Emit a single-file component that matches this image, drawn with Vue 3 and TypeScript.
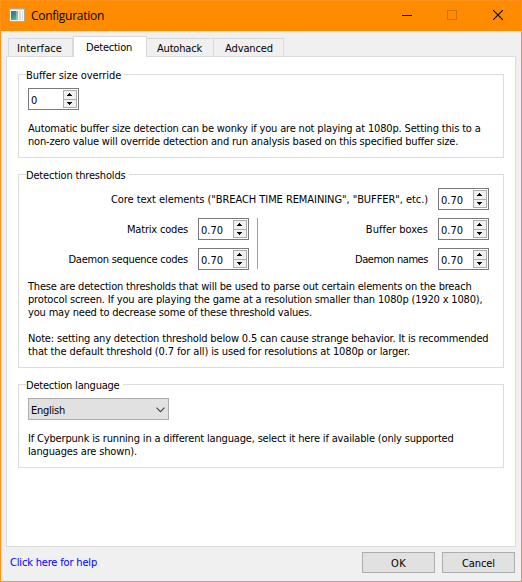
<script setup lang="ts">
import { ref } from 'vue'

interface Line { text: string; width: number }
interface Threshold { label: string; width: number; value: string }

const tabs = [
  { name: 'Interface', width: 45 },
  { name: 'Detection', width: 46 },
  { name: 'Autohack', width: 45 },
  { name: 'Advanced', width: 48 },
]
const active = ref('Detection')

const bufferNote: Line[] = [
  { text: 'Automatic buffer size detection can be wonky if you are not playing at 1080p. Setting this to a', width: 452.5 },
  { text: 'non-zero value will override detection and run analysis based on this specified buffer size.', width: 430 },
]
const thresholdNote: Line[] = [
  { text: 'These are detection thresholds that will be used to parse out certain elements on the breach', width: 443.5 },
  { text: 'protocol screen. If you are playing the game at a resolution smaller than 1080p (1920 x 1080),', width: 454.5 },
  { text: 'you may need to decrease some of these threshold values.', width: 284 },
]
const behaviorNote: Line[] = [
  { text: 'Note: setting any detection threshold below 0.5 can cause strange behavior. It is recommended', width: 460.5 },
  { text: 'that the default threshold (0.7 for all) is used for resolutions at 1080p or larger.', width: 382 },
]
const languageNote: Line[] = [
  { text: 'If Cyberpunk is running in a different language, select it here if available (only supported', width: 425.5 },
  { text: 'languages are shown).', width: 109 },
]
const core: Threshold = { label: 'Core text elements ("BREACH TIME REMAINING", "BUFFER", etc.)', width: 317, value: '0.70' }
const leftColumn: Threshold[] = [
  { label: 'Matrix codes', width: 61, value: '0.70' },
  { label: 'Daemon sequence codes', width: 119.5, value: '0.70' },
]
const rightColumn: Threshold[] = [
  { label: 'Buffer boxes', width: 62, value: '0.70' },
  { label: 'Daemon names', width: 73, value: '0.70' },
]

// Tracks a single-line label so that it takes the given width in pixels.
const vFit = {
  mounted(el: HTMLElement, binding: { value: number }) {
    const count = (el.textContent ?? '').length
    const natural = el.getBoundingClientRect().width
    el.style.letterSpacing = `${(binding.value - natural) / count}px`
  },
}
</script>

<template>
  <div class="window">
    <header class="titlebar">
      <svg class="app-icon" width="16" height="14" viewBox="0 0 16 14">
        <defs>
          <linearGradient id="pane" x1="0" y1="0" x2="0.5" y2="1">
            <stop offset="0" stop-color="#41699a" />
            <stop offset="0.55" stop-color="#3d8f86" />
            <stop offset="1" stop-color="#62b37c" />
          </linearGradient>
        </defs>
        <rect x="0.5" y="0.5" width="15" height="13" fill="#f4f4f4" stroke="#b5a98c" />
        <rect x="1" y="1" width="14" height="1" fill="#cfd9e2" />
        <rect x="2" y="3" width="7" height="9" fill="url(#pane)" />
        <rect x="7" y="3" width="2" height="9" fill="#b9cfd0" opacity=".6" />
        <rect x="10" y="3" width="2" height="9" fill="#d9dcdf" />
        <rect x="13" y="3" width="1" height="9" fill="#e0e3e6" />
      </svg>
      <span v-fit="73" class="title">Configuration</span>
      <div class="controls">
        <svg width="10" height="10" viewBox="0 0 10 10"><path d="M0 5.5H10" stroke="#000" /></svg>
        <svg width="10" height="10" viewBox="0 0 10 10"><rect x=".5" y=".5" width="9" height="9" fill="none" stroke="#cc7000" /></svg>
        <svg width="10" height="10" viewBox="0 0 10 10"><path d="M0 0L10 10M10 0L0 10" stroke="#000" stroke-width="1.1" /></svg>
      </div>
    </header>

    <main class="body">
      <nav class="tabs">
        <button v-for="tab in tabs" :key="tab.name" class="tab" :class="{ active: tab.name === active }" @click="active = tab.name">
          <span v-fit="tab.width">{{ tab.name }}</span>
        </button>
      </nav>

      <div class="panel">
        <section class="group buffer">
          <h2 class="legend"><span v-fit="95">Buffer size override</span></h2>
          <div class="spin">
            <span v-fit="6" class="value">0</span>
            <div class="steps">
              <i class="step"><svg width="5" height="3"><path d="M2 0h1v1h1v1h1v1h-5v-1h1v-1h1z" /></svg></i>
              <i class="step"><svg width="5" height="3"><path d="M0 0h5v1h-1v1h-1v1h-1v-1h-1v-1h-1z" /></svg></i>
            </div>
          </div>
          <p class="note"><span v-for="line in bufferNote" :key="line.text" v-fit="line.width">{{ line.text }}</span></p>
        </section>

        <section class="group thresholds">
          <h2 class="legend"><span v-fit="99.5">Detection thresholds</span></h2>
          <div class="field">
            <label><span v-fit="core.width">{{ core.label }}</span></label>
            <div class="spin">
              <span v-fit="22" class="value">{{ core.value }}</span>
              <div class="steps">
                <i class="step"><svg width="5" height="3"><path d="M2 0h1v1h1v1h1v1h-5v-1h1v-1h1z" /></svg></i>
                <i class="step"><svg width="5" height="3"><path d="M0 0h5v1h-1v1h-1v1h-1v-1h-1v-1h-1z" /></svg></i>
              </div>
            </div>
          </div>
          <div class="columns">
            <template v-for="(column, index) in [leftColumn, rightColumn]" :key="index">
              <div v-if="index" class="divider"></div>
              <div class="column">
                <div v-for="item in column" :key="item.label" class="field">
                  <label><span v-fit="item.width">{{ item.label }}</span></label>
                  <div class="spin">
                    <span v-fit="22" class="value">{{ item.value }}</span>
                    <div class="steps">
                      <i class="step"><svg width="5" height="3"><path d="M2 0h1v1h1v1h1v1h-5v-1h1v-1h1z" /></svg></i>
                      <i class="step"><svg width="5" height="3"><path d="M0 0h5v1h-1v1h-1v1h-1v-1h-1v-1h-1z" /></svg></i>
                    </div>
                  </div>
                </div>
              </div>
            </template>
          </div>
          <p class="note"><span v-for="line in thresholdNote" :key="line.text" v-fit="line.width">{{ line.text }}</span></p>
          <p class="note"><span v-for="line in behaviorNote" :key="line.text" v-fit="line.width">{{ line.text }}</span></p>
        </section>

        <section class="group language">
          <h2 class="legend"><span v-fit="93.5">Detection language</span></h2>
          <div class="select">
            <span v-fit="34">English</span>
            <svg width="9" height="6" viewBox="0 0 9 6"><path d="M.5 .7L4.5 4.7L8.5 .7" fill="none" stroke="#444" stroke-width="1.1" /></svg>
          </div>
          <p class="note"><span v-for="line in languageNote" :key="line.text" v-fit="line.width">{{ line.text }}</span></p>
        </section>
      </div>

      <footer class="footer">
        <a class="help"><span v-fit="87">Click here for help</span></a>
        <button class="push"><span v-fit="15">OK</span></button>
        <button class="push"><span v-fit="33">Cancel</span></button>
      </footer>
    </main>
  </div>
</template>

<style>
body { background: #f0f0f0; }
</style>

<style scoped>
* { box-sizing: border-box; }
.window {
  width: 522px;
  height: 582px;
  display: flex;
  flex-direction: column;
  border: 1px solid #ff9319;
  background: #f0f0f0;
  color: #000;
  font: 11px/13px "DejaVu Sans Condensed", "Noto Sans", sans-serif;
  white-space: nowrap;
}
svg { display: block; flex: none; }
button { font: inherit; color: inherit; padding: 0; margin: 0; border-radius: 0; }
.titlebar {
  height: 30px;
  flex: none;
  display: flex;
  align-items: center;
  background: #ff8c00;
  padding: 0 18px 0 8px;
}
.app-icon { margin-bottom: 2px; }
.title { margin-left: 6px; font: 12px/16px "Open Sans", sans-serif; }
.controls { margin-left: auto; display: flex; gap: 36px; padding-bottom: 2px; }
.controls svg:first-child { margin-right: -1px; }
.body { flex: 1; display: flex; flex-direction: column; padding: 5px 5px 8px; }
.tabs { display: flex; align-items: flex-end; padding-left: 2px; height: 21px; flex: none; position: relative; margin-bottom: -1px; }
.tab {
  height: 18px;
  margin-bottom: 1px;
  border: 1px solid #d9d9d9;
  border-bottom: 0;
  border-left: 0;
  background: #f0f0f0;
  display: flex;
  align-items: center;
  padding: 0 11px;
}
.tab span { padding-top: 2px; }
.tab:first-child { border-left: 1px solid #d9d9d9; padding: 0 11px 0 8px; width: 65px; }
.tab.active { height: 21px; margin-bottom: 0; background: #fff; border-left: 1px solid #d9d9d9; width: 74px; padding: 0 12px 1px; }
.tab:nth-child(3) { width: 67px; padding: 0 10px; }
.tab:nth-child(4) { width: 70px; padding-right: 10px; }
.panel {
  height: 491px;
  width: 510px;
  border: 1px solid #dcdcdc;
  background: #fff;
  padding: 17px 11px 0;
  display: flex;
  flex-direction: column;
  gap: 16px;
}
.group { border: 1px solid #dcdcdc; padding: 0 9px; width: 486px; }
.buffer { height: 84px; }
.thresholds { height: 194px; }
.language { height: 84px; }
.legend {
  font: inherit;
  width: fit-content;
  margin: -6px 0 6px -2px;
  padding-right: 3px;
  background: #fff;
  height: 13px;
}
.spin {
  width: 51px;
  height: 22px;
  flex: none;
  border: 1px solid #7a7a7a;
  background: #fff;
  display: flex;
  justify-content: space-between;
  padding: 1px 1px 1px 2px;
}
.value { align-self: center; padding-top: 3px; }
.steps { width: 14px; display: flex; flex-direction: column; }
.step {
  height: 10px;
  border: 1px solid #acacac;
  background: #f0f0f0;
  padding: 2px 0 0 3px;
}
.step + .step { height: 9px; margin-top: -1px; }
.note { margin: 0; display: flex; flex-direction: column; align-items: flex-start; }
.note + .note { margin-top: 13px; }
.buffer .note, .language .note { margin-top: 12px; }
.field { display: flex; align-items: center; justify-content: flex-end; gap: 10px; padding-right: 5px; height: 22px; }
.field label { padding-top: 1px; }
.columns { display: flex; margin: 8px 0 10px; }
.column { display: flex; flex-direction: column; gap: 8px; width: 226px; }
.column:last-child { margin-left: auto; }
.divider { width: 1px; height: 51px; margin-left: 3px; background: #a0a0a0; }
.select {
  width: 141px;
  height: 22px;
  border: 1px solid #adadad;
  background: #e1e1e1;
  display: flex;
  align-items: center;
  justify-content: space-between;
  padding: 0 3px 0 2px;
}
.select span { padding-top: 3px; }
.select svg { margin-top: 2px; }
.footer { flex: none; display: flex; padding: 5px 1px 0 4px; align-items: center; }
.help { margin-right: auto; color: #0000ff; }
.push {
  width: 73px;
  height: 21px;
  display: flex;
  align-items: center;
  justify-content: center;
  border: 1px solid #adadad;
  background: #e1e1e1;
}
.push span { padding-top: 2px; }
.push + .push { margin-left: 7px; }
</style>
